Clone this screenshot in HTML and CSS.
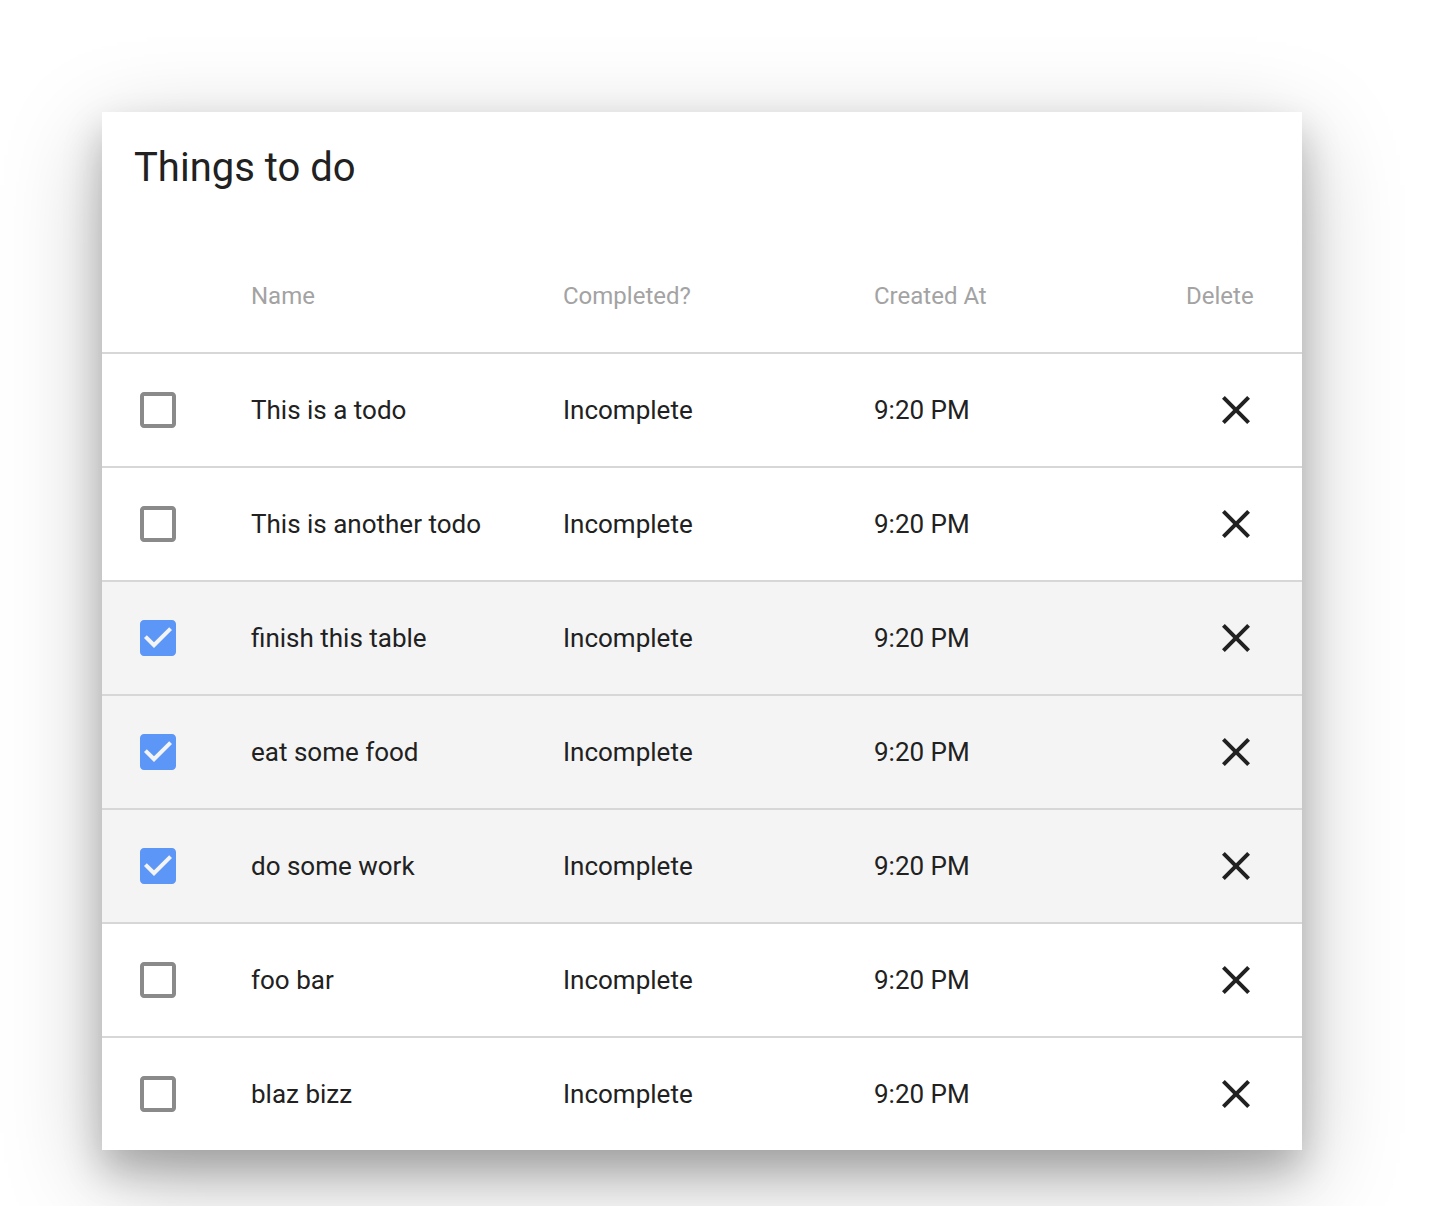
FILE: index.html
```html
<!DOCTYPE html>
<html>
<head>
<meta charset="utf-8">
<link rel="stylesheet" href="styles.css">
</head>
<body>
<div class="page">
  <div class="card">
    <div class="card-title">Things to do</div>
    <div class="row head">
      <div class="cell"></div>
      <div class="cell">Name</div>
      <div class="cell">Completed?</div>
      <div class="cell">Created At</div>
      <div class="cell">Delete</div>
    </div>

    <div class="row">
      <div class="cell check"><svg class="cb" viewBox="0 0 24 24"><path class="off" d="M19 5v14H5V5h14m0-2H5c-1.1 0-2 .9-2 2v14c0 1.1.9 2 2 2h14c1.1 0 2-.9 2-2V5c0-1.1-.9-2-2-2z"/></svg></div>
      <div class="cell">This is a todo</div>
      <div class="cell">Incomplete</div>
      <div class="cell">9:20 PM</div>
      <div class="cell"><svg class="x" viewBox="0 0 24 24"><path d="M19 6.41L17.59 5 12 10.59 6.41 5 5 6.41 10.59 12 5 17.59 6.41 19 12 13.41 17.59 19 19 17.59 13.41 12z"/></svg></div>
    </div>

    <div class="row">
      <div class="cell check"><svg class="cb" viewBox="0 0 24 24"><path class="off" d="M19 5v14H5V5h14m0-2H5c-1.1 0-2 .9-2 2v14c0 1.1.9 2 2 2h14c1.1 0 2-.9 2-2V5c0-1.1-.9-2-2-2z"/></svg></div>
      <div class="cell">This is another todo</div>
      <div class="cell">Incomplete</div>
      <div class="cell">9:20 PM</div>
      <div class="cell"><svg class="x" viewBox="0 0 24 24"><path d="M19 6.41L17.59 5 12 10.59 6.41 5 5 6.41 10.59 12 5 17.59 6.41 19 12 13.41 17.59 19 19 17.59 13.41 12z"/></svg></div>
    </div>

    <div class="row selected">
      <div class="cell check"><svg class="cb" viewBox="0 0 24 24"><path class="on" d="M19 3H5c-1.11 0-2 .9-2 2v14c0 1.1.89 2 2 2h14c1.11 0 2-.9 2-2V5c0-1.1-.89-2-2-2zm-9 14l-5-5 1.41-1.410L10 14.17l7.59-7.59L19 8l-9 9z"/></svg></div>
      <div class="cell">finish this table</div>
      <div class="cell">Incomplete</div>
      <div class="cell">9:20 PM</div>
      <div class="cell"><svg class="x" viewBox="0 0 24 24"><path d="M19 6.41L17.59 5 12 10.59 6.41 5 5 6.41 10.59 12 5 17.59 6.41 19 12 13.41 17.59 19 19 17.59 13.41 12z"/></svg></div>
    </div>

    <div class="row selected">
      <div class="cell check"><svg class="cb" viewBox="0 0 24 24"><path class="on" d="M19 3H5c-1.11 0-2 .9-2 2v14c0 1.1.89 2 2 2h14c1.11 0 2-.9 2-2V5c0-1.1-.89-2-2-2zm-9 14l-5-5 1.41-1.41L10 14.17l7.59-7.59L19 8l-9 9z"/></svg></div>
      <div class="cell">eat some food</div>
      <div class="cell">Incomplete</div>
      <div class="cell">9:20 PM</div>
      <div class="cell"><svg class="x" viewBox="0 0 24 24"><path d="M19 6.41L17.59 5 12 10.59 6.41 5 5 6.41 10.59 12 5 17.59 6.41 19 12 13.41 17.59 19 19 17.59 13.41 12z"/></svg></div>
    </div>

    <div class="row selected">
      <div class="cell check"><svg class="cb" viewBox="0 0 24 24"><path class="on" d="M19 3H5c-1.11 0-2 .9-2 2v14c0 1.1.89 2 2 2h14c1.11 0 2-.9 2-2V5c0-1.1-.89-2-2-2zm-9 14l-5-5 1.41-1.41L10 14.17l7.59-7.59L19 8l-9 9z"/></svg></div>
      <div class="cell">do some work</div>
      <div class="cell">Incomplete</div>
      <div class="cell">9:20 PM</div>
      <div class="cell"><svg class="x" viewBox="0 0 24 24"><path d="M19 6.41L17.59 5 12 10.59 6.41 5 5 6.41 10.59 12 5 17.59 6.41 19 12 13.41 17.59 19 19 17.59 13.41 12z"/></svg></div>
    </div>

    <div class="row">
      <div class="cell check"><svg class="cb" viewBox="0 0 24 24"><path class="off" d="M19 5v14H5V5h14m0-2H5c-1.1 0-2 .9-2 2v14c0 1.1.9 2 2 2h14c1.1 0 2-.9 2-2V5c0-1.1-.9-2-2-2z"/></svg></div>
      <div class="cell">foo bar</div>
      <div class="cell">Incomplete</div>
      <div class="cell">9:20 PM</div>
      <div class="cell"><svg class="x" viewBox="0 0 24 24"><path d="M19 6.41L17.59 5 12 10.59 6.41 5 5 6.41 10.59 12 5 17.59 6.41 19 12 13.41 17.59 19 19 17.59 13.41 12z"/></svg></div>
    </div>

    <div class="row last">
      <div class="cell check"><svg class="cb" viewBox="0 0 24 24"><path class="off" d="M19 5v14H5V5h14m0-2H5c-1.1 0-2 .9-2 2v14c0 1.1.9 2 2 2h14c1.1 0 2-.9 2-2V5c0-1.1-.9-2-2-2z"/></svg></div>
      <div class="cell">blaz bizz</div>
      <div class="cell">Incomplete</div>
      <div class="cell">9:20 PM</div>
      <div class="cell"><svg class="x" viewBox="0 0 24 24"><path d="M19 6.41L17.59 5 12 10.59 6.41 5 5 6.41 10.59 12 5 17.59 6.41 19 12 13.41 17.59 19 19 17.59 13.41 12z"/></svg></div>
    </div>
  </div>
</div>
</body>
</html>
```

FILE: styles.css
```css
html, body {
  margin: 0;
  padding: 0;
  background: #ffffff;
}

body {
  font-family: Roboto, "Liberation Sans", Arial, sans-serif;
  color: #212121;
}

.page {
  padding: 112px 0 56px 102px;
}

.card {
  width: 1200px;
  background: #ffffff;
  box-shadow: 0 28px 90px rgba(0, 0, 0, 0.25), 0 20px 36px rgba(0, 0, 0, 0.22);
}

.card-title {
  font-size: 40px;
  line-height: 40px;
  height: 40px;
  padding: 36px 0 52px 32px;
  color: #212121;
}

.row {
  display: grid;
  grid-template-columns: 149px 312px 311px 312px 1fr;
  height: 112px;
  align-items: center;
  border-bottom: 2px solid #d7d7d7;
  font-size: 26px;
  color: #212121;
}

.row.last {
  border-bottom: none;
}

.row.selected {
  background: #f4f4f4;
}

.row.head {
  font-size: 24px;
  color: #a3a3a3;
}

.cell {
  white-space: nowrap;
}

.cell.check {
  padding-left: 32px;
  display: flex;
  align-items: center;
}

.cb {
  width: 48px;
  height: 48px;
  display: block;
}

.cb .off {
  fill: #8a8a8a;
}

.cb .on {
  fill: #5c96f6;
}

.x {
  width: 48px;
  height: 48px;
  display: block;
  margin-left: 26px;
  fill: #212121;
}
```
